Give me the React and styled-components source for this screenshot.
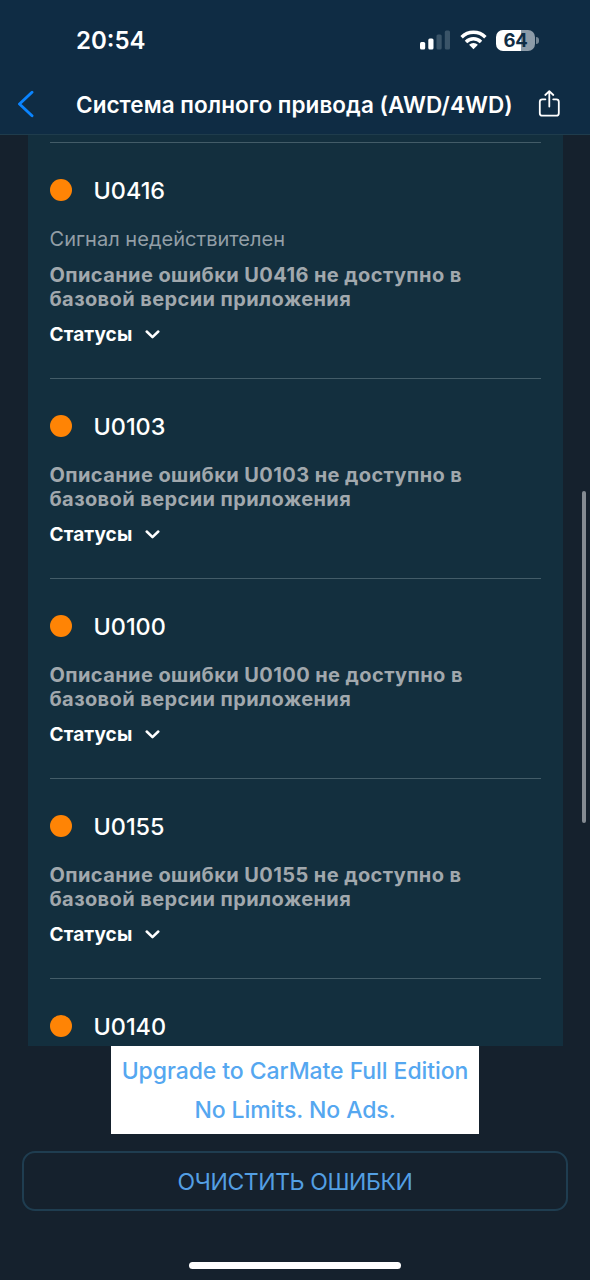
import React from "react";
import styled, { createGlobalStyle } from "styled-components";

const errors = [
    { code: "U0416", signal: "Сигнал недействителен" },
    { code: "U0103" },
    { code: "U0100" },
    { code: "U0155" },
    { code: "U0140", collapsed: true },
];

function StatusBar() {
    return (
        <S.StatusBar>
            <S.Time>20:54</S.Time>
            <S.StatusIcons>
                <svg width="31" height="20" viewBox="0 0 31 20">
                    <rect x="0" y="12" width="5.2" height="7.4" rx="1.5" fill="#fff" />
                    <rect x="8.3" y="8.6" width="5.2" height="10.8" rx="1.5" fill="#fff" />
                    <rect x="16.5" y="4.5" width="5.2" height="14.9" rx="1.5" fill="#3a5468" />
                    <rect x="24.8" y="0.5" width="5.2" height="18.9" rx="1.5" fill="#3a5468" />
                </svg>
                <svg width="27" height="20" viewBox="0 0 27 20">
                    <g fill="none" stroke="#fff" strokeWidth="3.5">
                        <path d="M1.6 7.2a17 17 0 0 1 23.8 0" />
                        <path d="M6 11.9a10.7 10.7 0 0 1 15 0" />
                    </g>
                    <path d="M13.5 19.2l-4.4-4.4a6.4 6.4 0 0 1 8.8 0z" fill="#fff" />
                </svg>
                <S.Battery>
                    <S.BatteryBody>64</S.BatteryBody>
                    <S.BatteryCap />
                </S.Battery>
            </S.StatusIcons>
        </S.StatusBar>
    );
}

function ErrorItem({ code, signal, collapsed }) {
    return (
        <S.Item $collapsed={collapsed}>
            <S.ItemHead $collapsed={collapsed}>
                <S.Dot />
                <h2>{code}</h2>
            </S.ItemHead>
            {signal && <S.Signal>{signal}</S.Signal>}
            {!collapsed && (
                <>
                    <S.Description>
                        Описание ошибки {code} не доступно в<br />
                        базовой версии приложения
                    </S.Description>
                    <S.StatusToggle type="button">
                        <span>Статусы</span>
                        <svg width="15" height="10" viewBox="0 0 15 10">
                            <path
                                d="M1.7 2.5l5.8 5.6 5.8-5.6"
                                fill="none"
                                stroke="#fff"
                                strokeWidth="2.5"
                                strokeLinecap="round"
                                strokeLinejoin="round"
                            />
                        </svg>
                    </S.StatusToggle>
                </>
            )}
        </S.Item>
    );
}

function App() {
    return (
        <Layout>
            <GlobalStyle />
            <S.Header>
                <StatusBar />
                <S.NavBar>
                    <S.IconButton type="button">
                        <svg width="17" height="28" viewBox="0 0 17 28">
                            <path
                                d="M15 2.3L2.5 14 15 25.7"
                                fill="none"
                                stroke="#0a84ff"
                                strokeWidth="2.9"
                                strokeLinecap="round"
                                strokeLinejoin="round"
                            />
                        </svg>
                    </S.IconButton>
                    <h1>Система полного привода (AWD/4WD)</h1>
                    <S.IconButton type="button">
                        <svg width="22" height="28" viewBox="0 0 22 28">
                            <g
                                fill="none"
                                stroke="#fff"
                                strokeWidth="1.8"
                                strokeLinecap="round"
                                strokeLinejoin="round"
                            >
                                <path d="M7.4 9.3H4.3a2.5 2.5 0 0 0-2.5 2.5v11.4a2.5 2.5 0 0 0 2.5 2.5h14a2.5 2.5 0 0 0 2.5-2.5V11.8a2.5 2.5 0 0 0-2.5-2.5h-3.1" />
                                <path d="M11.3 16.5V1.5M7.3 5l4-3.8 4 3.8" />
                            </g>
                        </svg>
                    </S.IconButton>
                </S.NavBar>
            </S.Header>
            <S.List>
                <S.Card>
                    {errors.map((error) => (
                        <ErrorItem key={error.code} {...error} />
                    ))}
                </S.Card>
                <S.Scrollbar />
            </S.List>
            <S.Footer>
                <S.Banner>
                    <p>Upgrade to CarMate Full Edition</p>
                    <p>No Limits. No Ads.</p>
                </S.Banner>
                <S.ClearButton type="button">ОЧИСТИТЬ ОШИБКИ</S.ClearButton>
                <S.HomeIndicator />
            </S.Footer>
        </Layout>
    );
}

const GlobalStyle = createGlobalStyle`
    * {
        box-sizing: border-box;
    }
    body {
        margin: 0;
        background-color: #15212d;
    }
    h1, h2, p {
        margin: 0;
    }
    button {
        padding: 0;
        border: 0;
        background: none;
        font-family: inherit;
    }
    svg {
        display: block;
        flex-shrink: 0;
    }
`;
const Layout = styled.div`
    display: flex;
    flex-direction: column;
    width: 590px;
    height: 1280px;
    overflow: hidden;
    background-color: #15212d;
    color: #fff;
    font-family: Inter, "Liberation Sans", sans-serif;
    white-space: nowrap;
`;
const Header = styled.header`
    flex: none;
    height: 135px;
    background-color: #0f2c44;
    border-bottom: 1px solid #1f3c4c;
`;
const StatusBar_ = styled.div`
    display: flex;
    align-items: center;
    justify-content: space-between;
    height: 80px;
    padding: 0 51px 0 76px;
`;
const Time = styled.span`
    font-size: 24px;
    font-weight: 600;
`;
const StatusIcons = styled.div`
    display: flex;
    align-items: center;
    gap: 9px;
`;
const Battery = styled.div`
    display: flex;
    align-items: center;
    gap: 1px;
`;
const BatteryBody = styled.div`
    width: 39px;
    height: 21px;
    border-radius: 7px;
    background: linear-gradient(to right, #fff 64%, #8c9ba8 64%);
    color: #102d45;
    font-size: 18.5px;
    font-weight: 700;
    letter-spacing: -0.3px;
    line-height: 21px;
    text-align: center;
`;
const BatteryCap = styled.div`
    width: 3px;
    height: 7px;
    border-radius: 0 3px 3px 0;
    background-color: #738594;
`;
const NavBar = styled.nav`
    display: flex;
    align-items: center;
    justify-content: space-between;
    height: 48px;
    padding: 0 30px 0 17px;

    & > h1 {
        width: 437px;
        margin-left: 17px;
        font-size: 22.5px;
        font-weight: 600;
        letter-spacing: 0.05px;
    }
`;
const IconButton = styled.button`
    display: flex;
`;
const List = styled.main`
    position: relative;
    flex: none;
    height: 911px;
    padding: 0 27.5px;
`;
const Card = styled.div`
    height: 100%;
    padding: 7px 22px 0;
    background-color: #132f3e;
`;
const Scrollbar = styled.div`
    position: absolute;
    top: 356px;
    right: 4px;
    width: 4px;
    height: 332px;
    border-radius: 2px;
    background-color: #848b92;
`;
const Item = styled.section`
    padding: 33px 0 ${(props) => (props.$collapsed ? "0" : "32px")};
    border-top: 1px solid #435c68;
`;
const ItemHead = styled.div`
    display: flex;
    align-items: center;
    gap: 22px;
    height: 28px;
    margin-bottom: ${(props) => (props.$collapsed ? "0" : "23px")};

    & > h2 {
        padding-top: 1px;
        font-size: 23.4px;
        font-weight: 500;
    }
`;
const Dot = styled.span`
    width: 22px;
    height: 22px;
    border-radius: 50%;
    background-color: #ff8405;
`;
const Signal = styled.p`
    margin-bottom: 12px;
    color: #929ea6;
    font-size: 20px;
    letter-spacing: 0.03px;
    line-height: 24px;
`;
const Description = styled.p`
    margin-bottom: 11px;
    color: #a1a8ad;
    font-size: 20px;
    font-weight: 700;
    letter-spacing: 0.41px;
    line-height: 24px;
`;
const StatusToggle = styled.button`
    display: flex;
    align-items: center;
    gap: 13px;
    height: 24px;
    color: #fff;
    font-size: 19px;
    font-weight: 700;
    letter-spacing: 0.1px;
`;
const Footer = styled.footer`
    display: flex;
    flex: 1;
    flex-direction: column;
    align-items: center;
`;
const Banner = styled.div`
    width: 368px;
    height: 88px;
    padding-top: 6px;
    background-color: #fff;
    color: #55a7f0;
    font-size: 23px;
    font-weight: 500;
    letter-spacing: -0.07px;
    line-height: 39px;
    text-align: center;
`;
const ClearButton = styled.button`
    width: 546px;
    height: 60px;
    margin-top: 17px;
    padding-top: 2px;
    border: 2px solid #1f3d50;
    border-radius: 13px;
    color: #539fe3;
    font-size: 23px;
    letter-spacing: -0.4px;
`;
const HomeIndicator = styled.div`
    width: 212px;
    height: 7px;
    margin-top: 51px;
    border-radius: 4px;
    background-color: #fff;
`;

const S = {
    Header,
    StatusBar: StatusBar_,
    Time,
    StatusIcons,
    Battery,
    BatteryBody,
    BatteryCap,
    NavBar,
    IconButton,
    List,
    Card,
    Scrollbar,
    Item,
    ItemHead,
    Dot,
    Signal,
    Description,
    StatusToggle,
    Footer,
    Banner,
    ClearButton,
    HomeIndicator,
};

export default App;
